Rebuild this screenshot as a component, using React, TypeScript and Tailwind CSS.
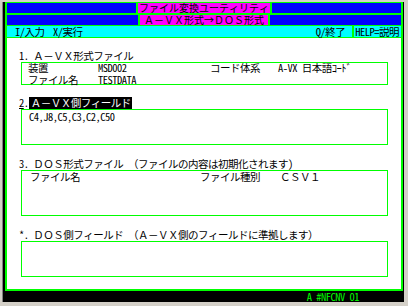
import React from "react";

const font =
  "font-['Noto_Sans_Mono_CJK_JP','Noto_Sans_CJK_JP',monospace] text-[10.5px] leading-[12px] tracking-[-0.5px] font-medium";

function Box({ h, children }: { h: string; children?: React.ReactNode }) {
  return (
    <div className={`ml-[14px] mr-[13px] border border-[#00ff00] ${h}`}>
      {children}
    </div>
  );
}

export default function App() {
  return (
    <div className={`w-[408px] h-[306px] bg-[#d4d0c8] pl-[2px] pt-[2px] pr-[4px] pb-[4px] text-black ${font}`}>
      <div className="h-full flex flex-col bg-black border-l border-[#808080] pl-[2px] pr-[1px]">
        {/* title bands */}
        <div className="bg-[#00ff00] px-[2px] pt-[1px] pb-[1px] flex flex-col text-black">
          <div className="h-[10px] bg-[#0000ff] flex justify-center">
            <div className="bg-[#ff00ff] border-x-2 border-[#00ff00] px-[1px] text-[10px] tracking-normal leading-[10px] whitespace-nowrap">
              ファイル変換ユーティリティ
            </div>
          </div>
          <div className="mt-[2px] h-[10px] bg-[#0000ff] flex justify-center">
            <div className="bg-[#ff00ff] border-x-2 border-[#00ff00] px-[4px] text-[10px] tracking-normal leading-[10px] whitespace-nowrap">
              Ａ－ＶＸ形式→ＤＯＳ形式
            </div>
          </div>
          <div className="mt-[1px] h-[11px] bg-[#00ffff] flex items-center leading-[11px] whitespace-nowrap">
            <div className="ml-[8px] w-[38px] shrink-0">I/入力</div>
            <div>X/実行</div>
            <div className="flex-1" />
            <div className="mr-[7px]">Q/終了</div>
            <div className="h-full border-l-2 border-[#00ff00] pl-[1px] pr-[2px]">HELP=説明</div>
          </div>
        </div>

        {/* form area */}
        <div className="flex-1 bg-white border-x-2 border-b-2 border-[#00ff00] flex flex-col whitespace-nowrap">
          <div className="mt-[12px] pl-[12px] h-[12px]">1. Ａ－ＶＸ形式ファイル</div>
          <Box h="h-[23px]">
            <div className="flex pl-[6px] -mt-[1px]">
              <span className="w-[70px]">装置</span>
              <span className="w-[112px]">MSD002</span>
              <span className="w-[68px]">コード体系</span>
              <span>A-VX 日本語ｺｰﾄﾞ</span>
            </div>
            <div className="flex pl-[6px]">
              <span className="w-[70px]">ファイル名</span>
              <span>TESTDATA</span>
            </div>
          </Box>

          <div className="mt-[12px] pl-[12px] h-[12px] flex">
            <span className="underline">2</span>
            <span className="w-[5px]">.</span>
            <span className="bg-black text-white pl-[2px] pr-[1px]">Ａ－ＶＸ側フィールド</span>
          </div>
          <Box h="h-[36px]">
            <div className="pl-[7px] pt-[1px]">C4,J8,C5,C3,C2,C50</div>
          </Box>

          <div className="mt-[13px] pl-[12px] h-[12px]">3. ＤＯＳ形式ファイル （ファイルの内容は初期化されます)</div>
          <Box h="h-[46px]">
            <div className="flex pl-[8px]">
              <span className="w-[170px]">ファイル名</span>
              <span className="w-[80px]">ファイル種別</span>
              <span>ＣＳＶ１</span>
            </div>
          </Box>

          <div className="mt-[13px] pl-[12px] h-[12px]">*. ＤＯＳ側フィールド （Ａ－ＶＸ側のフィールドに準拠します）</div>
          <Box h="h-[36px]" />
        </div>

        {/* status bar */}
        <div className="h-[11px] bg-black text-[#00ff00] flex justify-end pr-[44px] leading-[11px] whitespace-nowrap">
          A #NFCNV 01
        </div>
      </div>
    </div>
  );
}
